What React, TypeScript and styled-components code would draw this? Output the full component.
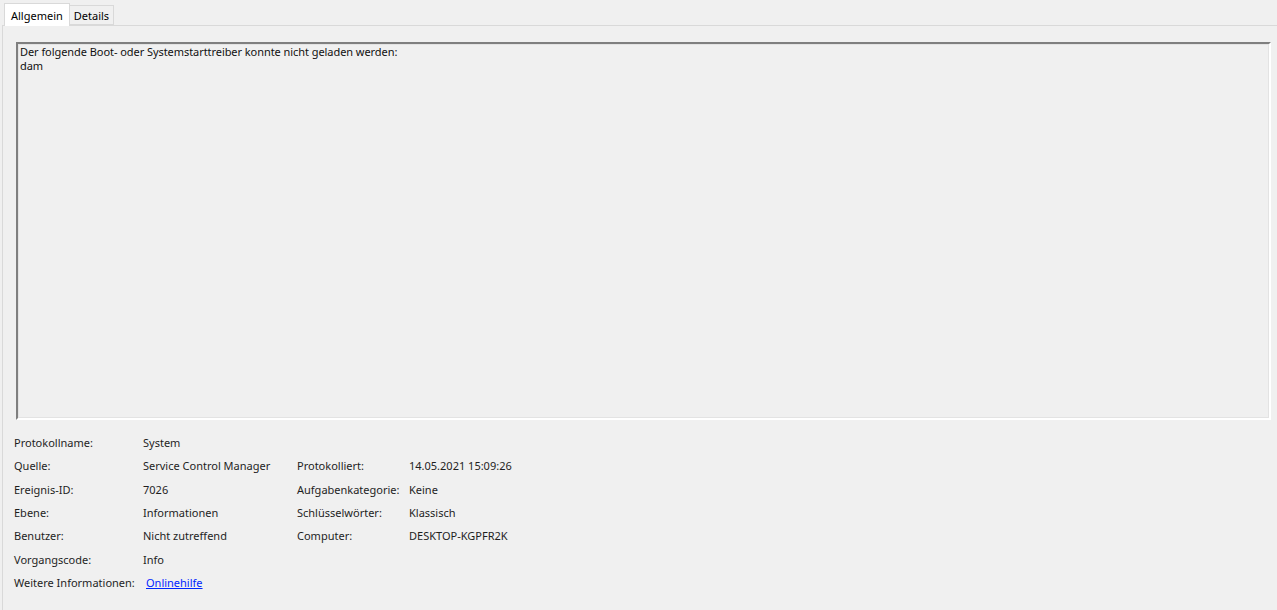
import React from "react";
import styled, { createGlobalStyle } from "styled-components";

const GlobalStyle = createGlobalStyle`
  html, body {
    margin: 0;
    padding: 0;
    background: #f0f0f0;
  }
  body {
    font-family: "Noto Sans", "Open Sans", sans-serif;
    font-size: 11px;
    color: #1e1e1e;
  }
`;

type Field = { label: string; value: string };

const leftFields: Field[] = [
  { label: "Protokollname:", value: "System" },
  { label: "Quelle:", value: "Service Control Manager" },
  { label: "Ereignis-ID:", value: "7026" },
  { label: "Ebene:", value: "Informationen" },
  { label: "Benutzer:", value: "Nicht zutreffend" },
  { label: "Vorgangscode:", value: "Info" },
];

const rightFields: (Field | null)[] = [
  null,
  { label: "Protokolliert:", value: "14.05.2021 15:09:26" },
  { label: "Aufgabenkategorie:", value: "Keine" },
  { label: "Schlüsselwörter:", value: "Klassisch" },
  { label: "Computer:", value: "DESKTOP-KGPFR2K" },
  null,
];

export default function App() {
  return (
    <>
      <GlobalStyle />
      <Window>
        <TabStrip>
          <Tab active>Allgemein</Tab>
          <Tab>Details</Tab>
        </TabStrip>
        <Panel>
          <MessageBox>
            Der folgende Boot- oder Systemstarttreiber konnte nicht geladen werden:
            <br />
            dam
          </MessageBox>
          <FieldGrid>
            {leftFields.map((f, i) => (
              <React.Fragment key={f.label}>
                <Label>{f.label}</Label>
                <Value>{f.value}</Value>
                <Label>{rightFields[i]?.label ?? ""}</Label>
                <Value>{rightFields[i]?.value ?? ""}</Value>
              </React.Fragment>
            ))}
            <Label>Weitere Informationen:</Label>
            <Value>
              <HelpLink href="#">Onlinehilfe</HelpLink>
            </Value>
          </FieldGrid>
        </Panel>
      </Window>
    </>
  );
}

const Window = styled.div`
  height: 610px;
  display: flex;
  flex-direction: column;
  overflow: hidden;
`;

const TabStrip = styled.div`
  display: flex;
  align-items: flex-end;
  height: 25px;
  padding-left: 4px;
  position: relative;
  z-index: 1;
`;

const Tab = styled.div<{ active?: boolean }>`
  box-sizing: border-box;
  display: flex;
  align-items: center;
  padding: 0 ${(p) => (p.active ? "6px" : "4px")};
  height: ${(p) => (p.active ? "23px" : "20px")};
  margin-bottom: ${(p) => (p.active ? "-1px" : "0")};
  background: ${(p) => (p.active ? "#ffffff" : "#f0f0f0")};
  border: 1px solid #d9d9d9;
  border-bottom: ${(p) => (p.active ? "none" : "1px solid #d9d9d9")};
  border-left: ${(p) => (p.active ? "1px solid #d9d9d9" : "none")};
  font-size: 11px;
  color: #000;
`;

const Panel = styled.div`
  flex: 1;
  margin-left: 2px;
  border-top: 1px solid #d9d9d9;
  border-left: 1px solid #d9d9d9;
  padding: 16px 6px 0 13px;
  display: flex;
  flex-direction: column;
`;

const MessageBox = styled.div`
  box-sizing: border-box;
  height: 378px;
  padding: 1px 2px;
  line-height: 14px;
  letter-spacing: -0.06px;
  border-top: 2px solid #7f7f7f;
  border-left: 2px solid #7f7f7f;
  border-right: 2px solid #ffffff;
  border-bottom: 2px solid #ffffff;
  box-shadow: 1px 1px 0 #e3e3e3 inset, -1px -1px 0 #e3e3e3 inset;
  color: #111;
`;

const FieldGrid = styled.div`
  display: grid;
  grid-template-columns: 129px 154px 112px auto;
  grid-auto-rows: 23.3px;
  align-items: center;
  margin: 11px 0 0 -2px;
`;

const Label = styled.div`
  white-space: nowrap;
`;

const Value = styled.div`
  white-space: nowrap;
`;

const HelpLink = styled.a`
  margin-left: 3px;
  color: #0026ff;
  text-decoration: underline;
`;
